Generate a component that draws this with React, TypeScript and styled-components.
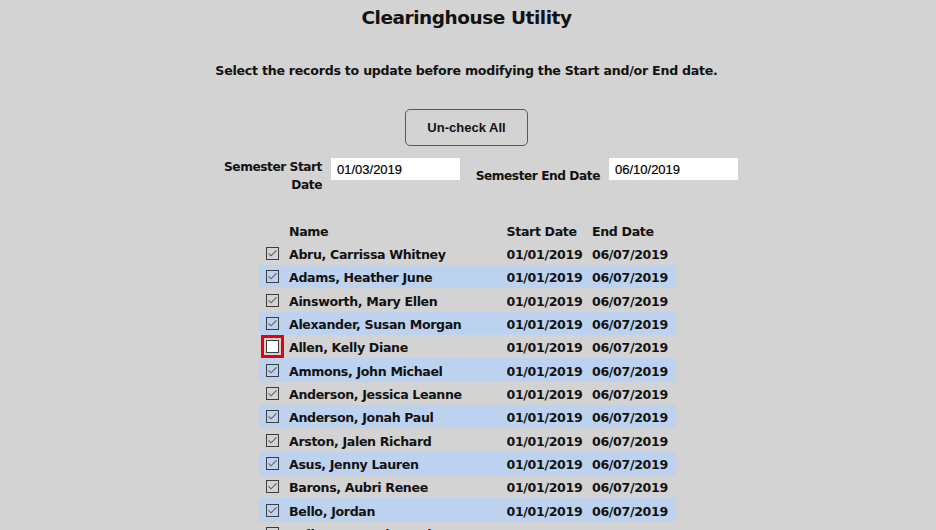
import React, { useState } from "react";
import styled, { createGlobalStyle } from "styled-components";

const GlobalStyle = createGlobalStyle`
  html, body {
    margin: 0;
    padding: 0;
    background: #d3d3d3;
    overflow: hidden;
  }
  body {
    font-family: "DejaVu Sans", "Liberation Sans", sans-serif;
    color: #121212;
  }
`;

const Page = styled.div`
  display: flex;
  flex-direction: column;
  align-items: center;
  width: 933px;
  min-height: 530px;
`;

const Title = styled.h1`
  margin: 0;
  padding-top: 6px;
  font-size: 18.5px;
  letter-spacing: -0.45px;
  line-height: 24px;
  font-weight: bold;
`;

const Instructions = styled.p`
  margin: 31px 0 0;
  font-size: 12.6px;
  letter-spacing: -0.25px;
  line-height: 20px;
  font-weight: bold;
`;

const ActionButton = styled.button`
  margin-top: 28px;
  width: 123px;
  height: 37px;
  background: #d3d3d3;
  border: 1px solid #5a5a5a;
  border-radius: 5px;
  font-family: "Liberation Sans", Arial, sans-serif;
  font-weight: bold;
  font-size: 13px;
  color: #111;
  cursor: pointer;
`;

const DateRow = styled.div`
  margin-top: 12px;
  display: flex;
  align-items: flex-start;
`;

const FieldLabel = styled.label<{ $width: number; $center?: boolean }>`
  width: ${(p) => p.$width}px;
  font-size: 12.2px;
  letter-spacing: -0.45px;
  line-height: 18px;
  font-weight: bold;
  text-align: right;
  align-self: ${(p) => (p.$center ? "center" : "flex-start")};
`;

const DateInput = styled.input`
  width: 129px;
  height: 22px;
  box-sizing: border-box;
  margin: 0 0 0 9px;
  padding: 0 6px;
  border: none;
  outline: none;
  background: #fff;
  font-family: "Liberation Sans", Arial, sans-serif;
  font-size: 13px;
  color: #000;
  -webkit-text-stroke: 0.2px #000;
`;

const Spacer = styled.div`
  width: 11px;
`;

const Table = styled.div`
  margin-top: 24.3px;
  margin-left: 1px;
  width: 417px;
  display: flex;
  flex-direction: column;
`;

const Row = styled.div<{ $striped?: boolean }>`
  display: grid;
  grid-template-columns: 30.5px 217.5px 85.5px 83.5px;
  align-items: center;
  box-sizing: border-box;
  height: 23.33px;
  padding-top: 2.5px;
  background: ${(p) => (p.$striped ? "#bcd2ee" : "transparent")};
  font-size: 12.6px;
  letter-spacing: -0.35px;
  font-weight: bold;
  white-space: nowrap;
`;

const Cell = styled.div`
  overflow: hidden;
`;

const CheckCell = styled.div`
  display: flex;
  align-items: center;
  padding-left: 7px;
  margin-top: -2px;
`;

const Box = styled.span<{ $checked: boolean; $focused?: boolean }>`
  display: block;
  width: 13px;
  height: 13px;
  box-sizing: border-box;
  border: 1px solid #3c3c3c;
  background: ${(p) => (p.$checked ? "transparent" : "#ffffff")};
  outline: ${(p) => (p.$focused ? "3px solid #e3000f" : "none")};
  outline-offset: 2px;
  cursor: pointer;
  svg {
    display: block;
  }
`;

type Rec = { name: string; start: string; end: string; checked: boolean };

const initial: Rec[] = [
  "Abru, Carrissa Whitney",
  "Adams, Heather June",
  "Ainsworth, Mary Ellen",
  "Alexander, Susan Morgan",
  "Allen, Kelly Diane",
  "Ammons, John Michael",
  "Anderson, Jessica Leanne",
  "Anderson, Jonah Paul",
  "Arston, Jalen Richard",
  "Asus, Jenny Lauren",
  "Barons, Aubri Renee",
  "Bello, Jordan",
  "Bellamy, Wendy Marie",
].map((name) => ({
  name,
  start: "01/01/2019",
  end: "06/07/2019",
  checked: name !== "Allen, Kelly Diane",
}));

function Check({
  checked,
  focused,
  onToggle,
}: {
  checked: boolean;
  focused?: boolean;
  onToggle: () => void;
}) {
  return (
    <Box $checked={checked} $focused={focused} onClick={onToggle} role="checkbox" aria-checked={checked}>
      {checked && (
        <svg width="11" height="11" viewBox="0 0 11 11">
          <polyline points="1.5,5.3 4,7.8 9.5,2.3" fill="none" stroke="#5f5f5f" strokeWidth="1.1" />
        </svg>
      )}
    </Box>
  );
}

export default function App() {
  const [rows, setRows] = useState<Rec[]>(initial);
  const toggle = (i: number) =>
    setRows((r) => r.map((x, j) => (j === i ? { ...x, checked: !x.checked } : x)));

  return (
    <>
      <GlobalStyle />
      <Page>
        <Title>Clearinghouse Utility</Title>
        <Instructions>Select the records to update before modifying the Start and/or End date.</Instructions>
        <ActionButton onClick={() => setRows((r) => r.map((x) => ({ ...x, checked: false })))}>
          Un-check All
        </ActionButton>
        <DateRow>
          <FieldLabel $width={127}>Semester Start Date</FieldLabel>
          <DateInput defaultValue="01/03/2019" />
          <Spacer />
          <FieldLabel $width={129} $center>
            Semester End Date
          </FieldLabel>
          <DateInput defaultValue="06/10/2019" />
        </DateRow>
        <Table>
          <Row>
            <Cell />
            <Cell>Name</Cell>
            <Cell>Start Date</Cell>
            <Cell>End Date</Cell>
          </Row>
          {rows.map((r, i) => (
            <Row key={r.name} $striped={i % 2 === 1}>
              <CheckCell>
                <Check checked={r.checked} focused={i === 4} onToggle={() => toggle(i)} />
              </CheckCell>
              <Cell>{r.name}</Cell>
              <Cell>{r.start}</Cell>
              <Cell>{r.end}</Cell>
            </Row>
          ))}
        </Table>
      </Page>
    </>
  );
}
